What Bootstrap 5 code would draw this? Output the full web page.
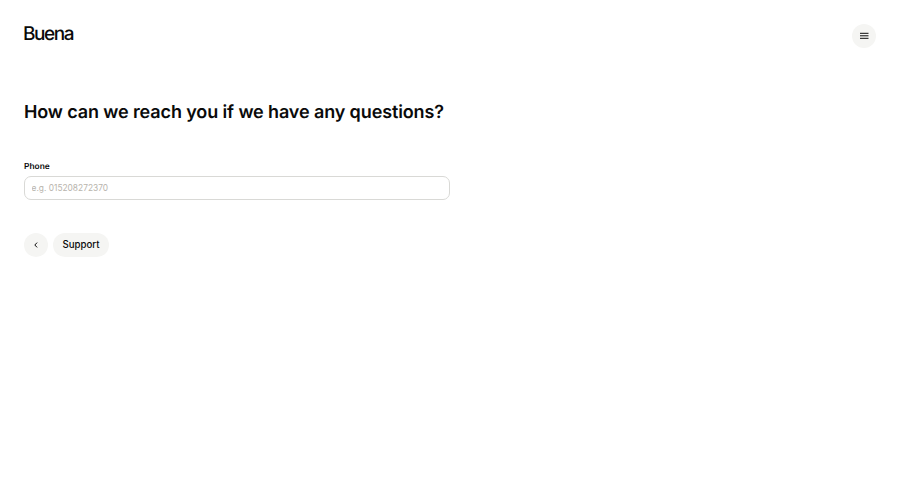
<!DOCTYPE html>
<html lang="en">
<head>
<meta charset="utf-8">
<meta name="viewport" content="width=device-width, initial-scale=1">
<title>Buena</title>
<link href="https://cdn.jsdelivr.net/npm/bootstrap@5.3.0/dist/css/bootstrap.min.css" rel="stylesheet">
<style>
body{font-family:Inter,"Liberation Sans",sans-serif;color:#0a0a0a;background:#fff;text-rendering:geometricPrecision}
.page-header{padding:24px 24px 0 23px}
.brand-name{font-size:19px;line-height:19px;letter-spacing:-1.45px;font-weight:500;color:#0a0a0a}
.soft-btn{--bs-btn-bg:#f5f5f3;--bs-btn-color:#0a0a0a;--bs-btn-hover-bg:#ebebe8;--bs-btn-border-width:0;height:24px;font-size:9.7px;line-height:24px;font-weight:500}
.round-btn{width:24px}
.support-btn{width:56px}
.page-main{width:474px;padding:53px 24px 0}
.question{font-size:18px;line-height:24px;font-weight:600;letter-spacing:-.12px;margin-bottom:36px;white-space:nowrap}
.field-label{font-size:8.4px;line-height:12px;font-weight:600;margin-bottom:3px}
.phone-input{height:24px;border-color:#d9d9d6;border-radius:7px;font-size:8.4px;line-height:12px;padding:5px 6.5px}
.phone-input::placeholder{color:#b8b4ad;opacity:1}
.actions{margin-top:33px;gap:5px}
</style>
</head>
<body>
<header class="page-header d-flex justify-content-between align-items-start">
<a class="brand-name text-decoration-none" href="#">Buena</a>
<button class="btn soft-btn round-btn rounded-circle p-0 d-flex align-items-center justify-content-center" aria-label="Menu"><svg width="10" height="8" viewBox="0 0 10 8" stroke="#0a0a0a" stroke-width="1"><path d="M1 1.3h8.5M1 3.8h8.5M1 6.3h8.5"/></svg></button>
</header>
<main class="page-main">
<h1 class="question">How can we reach you if we have any questions?</h1>
<form>
<label class="form-label field-label d-block" for="phone">Phone</label>
<input class="form-control phone-input" id="phone" type="tel" placeholder="e.g. 015208272370">
<div class="actions d-flex">
<button type="button" class="btn soft-btn round-btn rounded-circle p-0 d-flex align-items-center justify-content-center" aria-label="Back"><svg width="6" height="8" viewBox="0 0 6 8" fill="none" stroke="#0a0a0a"><path d="M4.1 1.6 1.8 4 4.1 6.4"/></svg></button>
<button type="button" class="btn soft-btn support-btn rounded-pill p-0">Support</button>
</div>
</form>
</main>
<script src="https://cdn.jsdelivr.net/npm/bootstrap@5.3.0/dist/js/bootstrap.bundle.min.js"></script>
</body>
</html>
